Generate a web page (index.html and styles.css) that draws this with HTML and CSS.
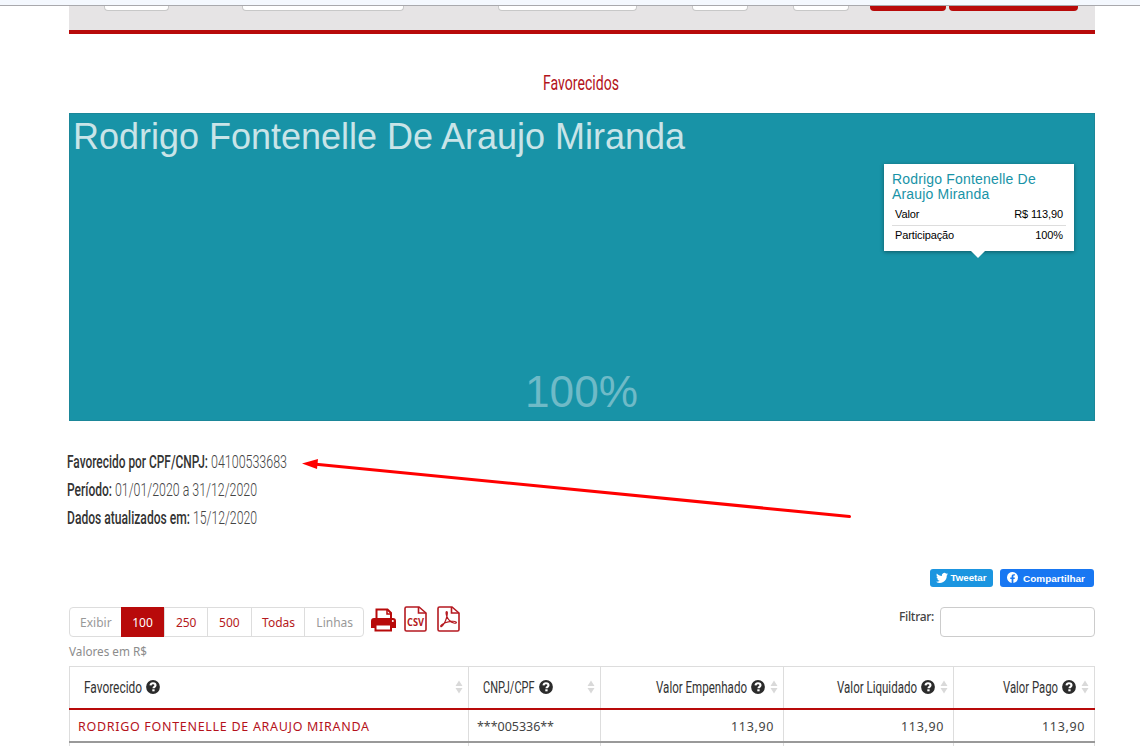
FILE: index.html
```html
<!DOCTYPE html>
<html lang="pt-BR">
<head>
<meta charset="utf-8">
<title>Favorecidos</title>
<link rel="stylesheet" href="styles.css">
</head>
<body>
<svg class="defs" width="0" height="0">
  <symbol id="help" viewBox="0 0 14 14"><circle cx="7" cy="7" r="6.900" fill="#2b2b2b"/><path d="M4.500 5.400C4.700 3.900 5.700 3.300 7 3.300c1.500 0 2.500.8 2.500 2 0 1.500-2 1.500-2 3" fill="none" stroke="#fff" stroke-width="2.100"/><rect x="6.300" y="9.300" width="2.300" height="2" fill="#fff"/></symbol>
  <symbol id="sort" viewBox="0 0 8 14"><path d="M4 0.500 7.500 6H.5zM4 13.500.5 8h7z" fill="#d9d9d9"/></symbol>
</svg>
<div class="topbar"></div>
<main class="page">
  <div class="filters">
    <i class="field f1"></i><i class="field f2"></i><i class="field f3"></i><i class="field f4"></i><i class="field f5"></i><i class="action a1"></i><i class="action a2"></i>
  </div>
  <h1 class="title"><svg width="80" height="28"><text x="1" y="19" textLength="76" lengthAdjust="spacingAndGlyphs">Favorecidos</text></svg></h1>
  <section class="chart">
    <svg class="name" width="620" height="46"><text x="0" y="33" textLength="612" lengthAdjust="spacingAndGlyphs">Rodrigo Fontenelle De Araujo Miranda</text></svg>
    <svg class="percent" width="120" height="54"><text x="0" y="42" textLength="113" lengthAdjust="spacingAndGlyphs">100%</text></svg>
    <div class="tooltip">
      <div class="tip-title">Rodrigo Fontenelle De<br>Araujo Miranda</div>
      <div class="tip-row"><span>Valor</span><span>R$ 113,90</span></div>
      <div class="tip-row"><span>Participação</span><span>100%</span></div>
    </div>
  </section>
  <section class="info">
    <div class="line"><svg width="141" height="28"><text class="b" x="0" y="19" textLength="141" lengthAdjust="spacingAndGlyphs">Favorecido por CPF/CNPJ:</text></svg><svg width="78" height="28"><text class="l" x="0" y="19" textLength="76" lengthAdjust="spacingAndGlyphs">04100533683</text></svg></div>
    <div class="line"><svg width="45" height="28"><text class="b" x="0" y="19" textLength="45" lengthAdjust="spacingAndGlyphs">Período:</text></svg><svg width="144" height="28"><text class="l" x="0" y="19" textLength="142" lengthAdjust="spacingAndGlyphs">01/01/2020 a 31/12/2020</text></svg></div>
    <div class="line"><svg width="123" height="28"><text class="b" x="0" y="19" textLength="123" lengthAdjust="spacingAndGlyphs">Dados atualizados em:</text></svg><svg width="66" height="28"><text class="l" x="0" y="19" textLength="64" lengthAdjust="spacingAndGlyphs">15/12/2020</text></svg></div>
    <svg class="arrow" width="560" height="70"><path d="M14 9.200 547.500 61.500" stroke="#f00" stroke-width="3" stroke-linecap="round"/><path d="M0 8.500 16 4 15 14z" fill="#f00"/></svg>
  </section>
  <div class="share">
    <span class="btn tw"><svg width="12" height="10" viewBox="0 0 24 20"><path fill="#fff" d="M24 2.400c-.9.400-1.800.7-2.800.8 1-.6 1.800-1.600 2.200-2.700-1 .6-2 1-3.100 1.200A4.900 4.900 0 0 0 11.800 6.200C7.700 6 4.100 4 1.700 1a4.900 4.900 0 0 0 1.500 6.600C2.400 7.500 1.600 7.300 1 7a4.900 4.900 0 0 0 3.900 4.900c-.7.200-1.500.2-2.200.1a4.900 4.900 0 0 0 4.600 3.400A9.900 9.900 0 0 1 0 17.500 14 14 0 0 0 21.500 5c1-.7 1.800-1.600 2.500-2.600z"/></svg><svg width="38" height="14"><text x="-.5" y="10" textLength="36" lengthAdjust="spacingAndGlyphs">Tweetar</text></svg></span>
    <span class="btn fb"><svg class="fbi" width="11" height="11" viewBox="0 0 24 24"><path fill="#fff" d="M24 12A12 12 0 1 0 10.100 23.900v-8.400H7.100V12h3V9.400c0-3 1.800-4.700 4.600-4.700 1.300 0 2.600.2 2.600.2v3h-1.500c-1.500 0-1.900.9-1.900 1.800V12h3.300l-.5 3.500h-2.800v8.400A12 12 0 0 0 24 12z"/></svg><svg width="64" height="14"><text x="0" y="11" textLength="62" lengthAdjust="spacingAndGlyphs">Compartilhar</text></svg></span>
  </div>
  <div class="tools">
    <div class="pager"><span class="w52 mute">Exibir</span><span class="w44 active">100</span><span class="w42">250</span><span class="w44">500</span><span class="w54">Todas</span><span class="w59 mute">Linhas</span></div>
    <div class="exports">
      <svg width="25" height="24" viewBox="0 0 25 24"><path d="M5.500 11V1.500h11l3.500 3.500v6" fill="#fff" stroke="#b80a0a" stroke-width="2"/><path d="M16 1v5h4.500" fill="none" stroke="#b80a0a" stroke-width="1.500"/><path d="M3 10h19q3 0 3 3v7h-4v-3H4v3H0v-7q0-3 3-3z" fill="#b80a0a"/><path d="M4.500 16.500h15.500v6H4.500z" fill="#fff" stroke="#b80a0a" stroke-width="2"/><circle cx="21.800" cy="13" r="1" fill="#fff"/></svg>
      <svg width="23" height="26" viewBox="0 0 23 26"><path d="M1 2.500Q1 1 2.500 1H15l7 6v16.500q0 1.500-1.500 1.500h-18Q1 25 1 23.500z" fill="#fff" stroke="#b51920" stroke-width="1.600"/><path d="M14.500 1v6H22" fill="none" stroke="#b51920" stroke-width="1.600"/><text class="csv" x="3" y="19.500" textLength="17" lengthAdjust="spacingAndGlyphs">CSV</text></svg>
      <svg width="23" height="26" viewBox="0 0 23 26"><path d="M1 2.500Q1 1 2.500 1H15l7 6v16.500q0 1.500-1.500 1.500h-18Q1 25 1 23.500z" fill="#fff" stroke="#b51920" stroke-width="1.600"/><path d="M14.500 1v6H22" fill="none" stroke="#b51920" stroke-width="1.600"/><path d="M9.800 5.500c-1.200 0-.8 3 .2 5.200 1.200 2.800 3.600 5.300 6.800 6.300 2.200.7 3.200-.3 2.200-1.100-1.700-1.200-7.200-.5-10.700.8C5.500 17.900 3.200 19.500 3.700 20.300c.8 1.200 3.200-2 4.600-5 1.300-2.800 2.900-9.800 1.500-9.800z" fill="none" stroke="#b51920" stroke-width="1.200"/></svg>
    </div>
    <label class="search"><span>Filtrar:</span><input type="text"></label>
  </div>
  <div class="unit"><svg width="90" height="20"><text x="0" y="14" textLength="78" lengthAdjust="spacingAndGlyphs">Valores em R$</text></svg></div>
  <div class="table">
    <div class="row head">
      <div class="cell"><svg class="h" width="58" height="22"><text x="0" y="16" textLength="58" lengthAdjust="spacingAndGlyphs">Favorecido</text></svg><svg class="q"><use href="#help"/></svg><svg class="s"><use href="#sort"/></svg></div>
      <div class="cell"><svg class="h" width="52" height="22"><text x="0" y="16" textLength="51.500" lengthAdjust="spacingAndGlyphs">CNPJ/CPF</text></svg><svg class="q"><use href="#help"/></svg><svg class="s"><use href="#sort"/></svg></div>
      <div class="cell num"><svg class="h" width="91" height="22"><text x="0" y="16" textLength="91" lengthAdjust="spacingAndGlyphs">Valor Empenhado</text></svg><svg class="q"><use href="#help"/></svg><svg class="s"><use href="#sort"/></svg></div>
      <div class="cell num"><svg class="h" width="80" height="22"><text x="0" y="16" textLength="80" lengthAdjust="spacingAndGlyphs">Valor Liquidado</text></svg><svg class="q"><use href="#help"/></svg><svg class="s"><use href="#sort"/></svg></div>
      <div class="cell num"><svg class="h" width="55" height="22"><text x="0" y="16" textLength="55" lengthAdjust="spacingAndGlyphs">Valor Pago</text></svg><svg class="q"><use href="#help"/></svg><svg class="s"><use href="#sort"/></svg></div>
    </div>
    <div class="row data">
      <div class="cell"><svg width="300" height="20"><text class="red" x="0" y="15" textLength="291">RODRIGO FONTENELLE DE ARAUJO MIRANDA</text></svg></div>
      <div class="cell"><svg width="80" height="20"><text x="0" y="15" textLength="77">***005336**</text></svg></div>
      <div class="cell num"><svg width="44" height="20"><text x="1" y="15" textLength="42.500">113,90</text></svg></div>
      <div class="cell num"><svg width="44" height="20"><text x="1" y="15" textLength="42.500">113,90</text></svg></div>
      <div class="cell num"><svg width="44" height="20"><text x="1" y="15" textLength="42.500">113,90</text></svg></div>
    </div>
    <div class="row rest"><div class="cell"></div><div class="cell"></div><div class="cell"></div><div class="cell"></div><div class="cell"></div></div>
  </div>
</main>
</body>
</html>
```
FILE: styles.css
```css
* { box-sizing: border-box; }
body { margin: 0; height: 746px; overflow: hidden; background: #fff; font-family: "Noto Sans", "Open Sans", sans-serif; }
svg { display: block; flex: none; overflow: visible; }
.defs { position: absolute; }
.topbar { height: 6px; background: #f4f8fe; border-bottom: 1px solid #a9a9ad; }
.page { width: 1026px; margin-left: 69px; }
.filters { display: flex; align-items: flex-start; height: 28px; padding-left: 35px; background: #e6e4e5; border-bottom: 4px solid #b80a0a; }
.field { height: 5px; background: #fff; border: 1px solid #c8c8c8; border-top: 0; border-radius: 0 0 4px 4px; }
.action { height: 5px; background: #b80a0a; border-radius: 0 0 4px 4px; }
.f1 { width: 65px; }
.f2 { width: 162px; margin-left: 73px; }
.f3 { width: 139px; margin-left: 94px; }
.f4 { width: 56px; margin-left: 55px; }
.f5 { width: 56px; margin-left: 45px; }
.a1 { width: 76px; margin-left: 21px; }
.a2 { width: 129px; margin-left: 3px; }
.title { margin: 0; height: 79px; padding: 37px 0 0 473px; font: 400 21px Roboto, sans-serif; }
.title text { fill: #b3131b; }
.chart { position: relative; height: 308px; background: #1893a7; border: 1px solid #1b8799; padding: 2px 0 0 3px; display: flex; flex-direction: column; justify-content: space-between; font-family: "Liberation Sans", Arial, sans-serif; }
.name { font-size: 37px; fill: #c9e4e8; }
.percent { font-size: 45px; fill: #6fbac7; margin: 0 0 1px 452px; }
.tooltip { position: absolute; left: 814px; top: 50px; width: 190px; height: 87px; padding: 8px; background: #fff; box-shadow: 0 1px 4px rgba(0,0,0,.4); font-size: 11px; letter-spacing: -.12px; color: #000; }
.tooltip::after { content: ""; position: absolute; left: 87px; top: 87px; border: 7px solid transparent; border-top-color: #fff; border-bottom: 0; }
.tip-title { height: 32px; font-size: 14px; line-height: 15px; letter-spacing: .18px; color: #1893a7; }
.tip-row { display: flex; justify-content: space-between; height: 21px; padding: 0 3px; line-height: 20px; }
.tip-row + .tip-row { border-top: 1px solid #ddd; line-height: 19px; }
.info { position: relative; height: 148px; padding-top: 28px; margin-left: -2px; font: 18px Roboto, sans-serif; }
.line { display: flex; gap: 3px; }
.b { fill: #333; font-weight: 500; }
.l { fill: #444; font-weight: 300; }
.arrow { position: absolute; left: 235px; top: 34px; }
.share { display: flex; justify-content: flex-end; gap: 7px; height: 18px; padding-right: 1px; }
.btn { display: flex; align-items: center; height: 18px; border-radius: 3px; font: 700 9.500px "Liberation Sans", Arial, sans-serif; }
.btn text { fill: #fff; }
.tw { width: 63px; background: #1b95e0; padding-left: 6px; gap: 3px; }
.fb { width: 94px; background: #1877f2; padding-left: 7px; gap: 5px; }
.fbi { margin-top: -1px; }
.tools { display: flex; height: 30px; margin-top: 20px; }
.pager { display: flex; width: 295px; height: 30px; border: 1px solid #ddd; border-radius: 4px; font-size: 12px; line-height: 29px; text-align: center; }
.pager span { color: #b51920; border-left: 1px solid #ddd; }
.pager span:first-child { border: 0; margin-left: -1px; padding-left: 2px; }
.pager .mute { color: #999; }
.pager .active { background: #b80a0a; color: #fff; border: 0; height: 30px; margin-top: -1px; line-height: 31px; }
.w52 { width: 52px; } .w44 { width: 44px; } .w42 { width: 43px; } .w54 { width: 54px; } .w59 { width: 59px; }
.pager .w54, .pager .w59 { padding-left: 1px; }
.exports { display: flex; gap: 9px; align-items: center; height: 26px; margin: -1px 0 0 7px; }
.exports svg:first-child { margin: 2px -1px 0 0; }
.exports svg:last-child { margin-left: 1px; }
.csv { font: 700 10px "Open Sans", sans-serif; fill: #b51920; }
.search { display: flex; margin-left: auto; gap: 6px; font: 500 12px/20px "Noto Sans", sans-serif; letter-spacing: -.3px; color: #444; }
.search input { width: 155px; height: 30px; border: 1px solid #ccc; border-radius: 4px; background: #fff; }
.unit { height: 29px; padding-top: 5px; font-size: 12.500px; }
.unit text { fill: #8c8c8c; }
.table { border-top: 1px solid #ddd; border-right: 1px solid #ddd; }
.row { display: grid; grid-template-columns: 399px 132px 183px 170px 141px; margin-right: -1px; }
.cell { display: flex; align-items: center; border-left: 1px solid #ddd; min-width: 0; }
.head { height: 43px; border-bottom: 2px solid #b80a0a; font: 16px Roboto, sans-serif; }
.head .cell { padding: 0 5px 2px 14px; }
.h { margin-top: 2px; }
.h text { fill: #333; }
.q { width: 14px; height: 14px; margin-left: 4px; }
.s { width: 8px; height: 14px; margin: 1px 0 0 auto; }
.head .num { justify-content: flex-end; }
.num .s { margin-left: 5px; }
.data { height: 33px; border-bottom: 2px solid #999; font-size: 12.500px; }
.data .cell { padding: 0 9px 0 8px; }
.data .num { justify-content: flex-end; }
.data text { fill: #444; }
.data .red { fill: #b5121b; }
.rest { height: 5px; }
```
